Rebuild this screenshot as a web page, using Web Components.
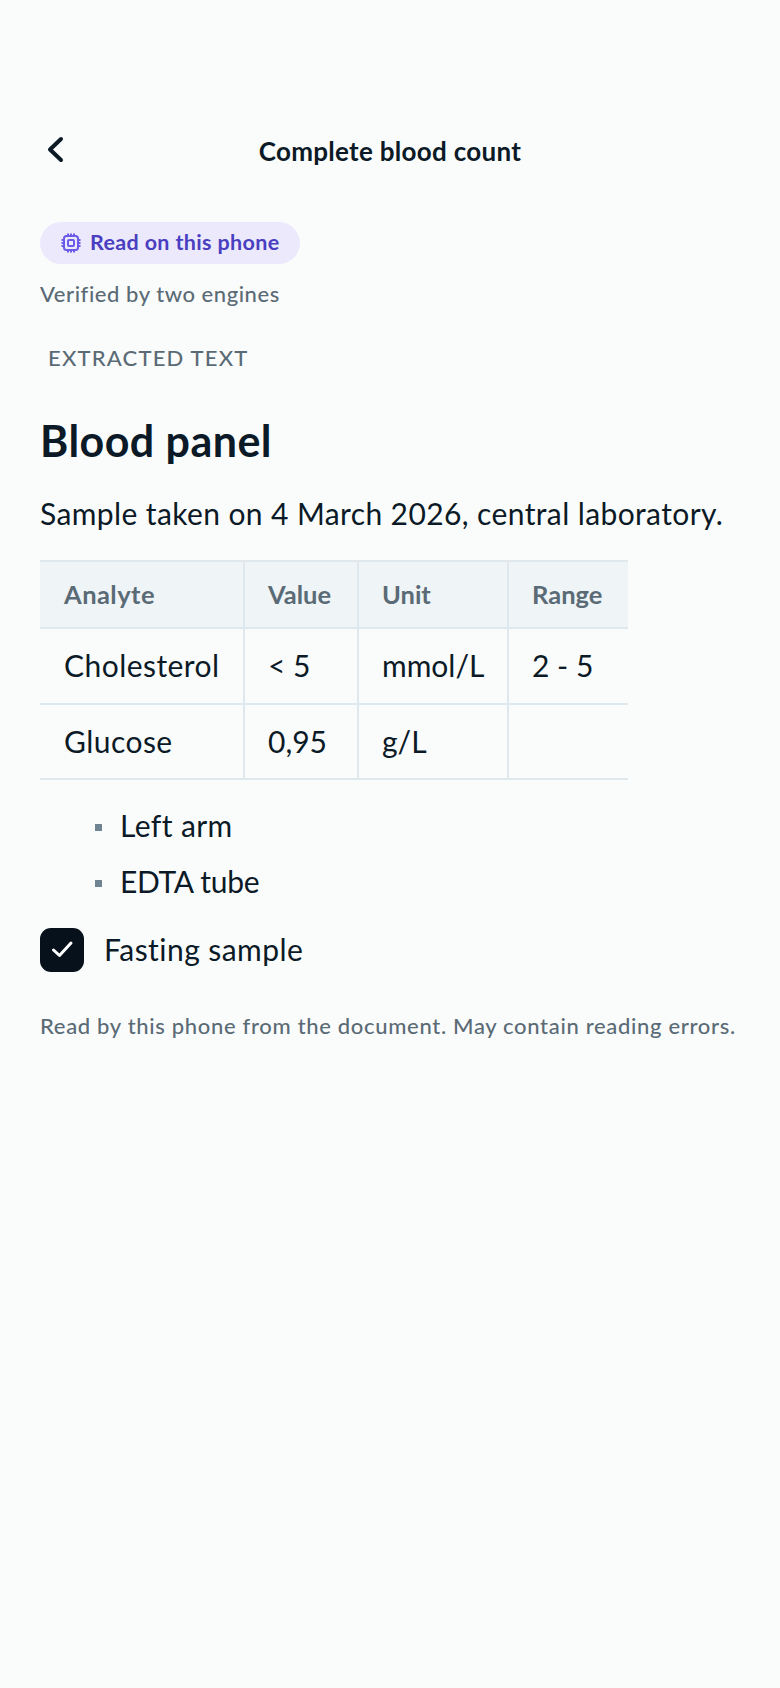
<!DOCTYPE html>
<html>
<head>
<meta charset="utf-8">
<style>
  html, body { margin: 0; background: #fafcfc; }
  body { font-family: "Lato", "Liberation Sans", sans-serif; color: #0b1a26; }
</style>
</head>
<body>
<result-screen>
  <top-bar title="Complete blood count"></top-bar>
  <read-badge>Read on this phone</read-badge>
  <small-note class="verified">Verified by two engines</small-note>
  <section-label>EXTRACTED TEXT</section-label>
  <doc-heading>Blood panel</doc-heading>
  <doc-para>Sample taken on 4 March 2026, central laboratory.</doc-para>
  <doc-table></doc-table>
  <doc-list></doc-list>
  <check-row>Fasting sample</check-row>
  <small-note class="foot">Read by this phone from the document. May contain reading errors.</small-note>
</result-screen>

<script>
class resultScreen extends HTMLElement {
  constructor(){
    super();
    this.attachShadow({mode:"open"});
    this.shadowRoot.innerHTML = `
      <style>
      :host { display: block; min-height: 1688px; box-sizing: border-box; padding: 126px 40px 0 40px; }
      ::slotted(.verified) { margin-top: 16px; letter-spacing: 0.55px; }
      ::slotted(.foot) { margin-top: 40px; letter-spacing: 0.68px; }
      </style>
      <slot></slot>
    `;
  }
}

class topBar extends HTMLElement {
  constructor(){
    super();
    this.attachShadow({mode:"open"});
  }
  connectedCallback(){
    this.shadowRoot.innerHTML = `
      <style>
      :host { display: flex; align-items: center; justify-content: center; position: relative; height: 50px; margin-bottom: 46px; }
      svg { position: absolute; left: 4px; top: 8px; }
      span { font-size: 26px; font-weight: 700; letter-spacing: 0.3px; }
      </style>
      <svg width="24" height="32" viewBox="0 0 24 32" fill="none" stroke="#0b1a26" stroke-width="4" stroke-linecap="round" stroke-linejoin="round"><path d="M17 5 6 15.5 17 26"/></svg>
      <span>${this.getAttribute("title")}</span>
    `;
  }
}

class readBadge extends HTMLElement {
  constructor(){
    super();
    this.attachShadow({mode:"open"});
    this.shadowRoot.innerHTML = `
      <style>
      :host { display: flex; align-items: center; gap: 9px; width: fit-content; height: 42px; padding: 0 21px 0 21px; border-radius: 21px; background: #ece9fd; color: #4a3fc0; font-size: 21.5px; font-weight: 700; letter-spacing: 0.35px; }
      span { padding-bottom: 2px; }
      </style>
      <svg width="20" height="20" viewBox="0 0 20 20" fill="none" stroke="#6a5ce8" stroke-width="2">
        <rect x="3" y="3" width="14" height="14" rx="2.5"/>
        <rect x="7" y="7" width="6" height="6" rx="1"/>
        <path d="M7 0.5v2M10 0.5v2M13 0.5v2M7 17.5v2M10 17.5v2M13 17.5v2M0.5 7h2M0.5 10h2M0.5 13h2M17.5 7h2M17.5 10h2M17.5 13h2"/>
      </svg>
      <span><slot></slot></span>
    `;
  }
}

class smallNote extends HTMLElement {
  constructor(){
    super();
    this.attachShadow({mode:"open"});
    this.shadowRoot.innerHTML = `
      <style>
      :host { display: block; font-size: 22px; line-height: 28px; letter-spacing: 0.6px; color: #5a6b76; font-weight: 500; }
      </style>
      <slot></slot>
    `;
  }
}

class sectionLabel extends HTMLElement {
  constructor(){
    super();
    this.attachShadow({mode:"open"});
    this.shadowRoot.innerHTML = `
      <style>
      :host { display: block; margin: 36px 0 0 8px; font-size: 22px; line-height: 28px; letter-spacing: 1.2px; color: #5a6b76; font-weight: 500; }
      </style>
      <slot></slot>
    `;
  }
}

class docHeading extends HTMLElement {
  constructor(){
    super();
    this.attachShadow({mode:"open"});
    this.shadowRoot.innerHTML = `
      <style>
      :host { display: block; margin-top: 42px; font-size: 43px; line-height: 54px; font-weight: 700; letter-spacing: 0.45px; }
      </style>
      <slot></slot>
    `;
  }
}

class docPara extends HTMLElement {
  constructor(){
    super();
    this.attachShadow({mode:"open"});
    this.shadowRoot.innerHTML = `
      <style>
      :host { display: block; margin-top: 25px; font-size: 30px; line-height: 40px; letter-spacing: 0.39px; }
      </style>
      <slot></slot>
    `;
  }
}

class docTable extends HTMLElement {
  constructor(){
    super();
    this.attachShadow({mode:"open"});
    const head = ["Analyte", "Value", "Unit", "Range"];
    const rows = [["Cholesterol", "< 5", "mmol/L", "2 - 5"], ["Glucose", "0,95", "g/L", ""]];
    this.shadowRoot.innerHTML = `
      <style>
      :host { display: block; margin-top: 27px; width: 588px; }
      .grid { display: grid; grid-template-columns: 205px 114px 150px 119px; grid-template-rows: 67px 76px 75px; border-top: 2px solid #dfe8ec; }
      .cell { box-sizing: border-box; display: flex; align-items: center; padding: 0 23px 2px; font-size: 30px; letter-spacing: 0; border-bottom: 2px solid #dfe8ec; border-right: 2px solid #dfe8ec; white-space: nowrap; }
      .cell:nth-child(4n+1) { padding-left: 24px; letter-spacing: 0.45px; }
      .cell:nth-child(4n) { border-right: 0; }
      .th { padding-bottom: 1px; background: #eff4f7; font-size: 25.5px; font-weight: 700; color: #5a6b76; }
      </style>
      <div class="grid">
        ${head.map(h => `<div class="cell th">${h}</div>`).join("")}
        ${rows.map(r => r.map(c => `<div class="cell">${c.replace("<", "&lt;")}</div>`).join("")).join("")}
      </div>
    `;
  }
}

class docList extends HTMLElement {
  constructor(){
    super();
    this.attachShadow({mode:"open"});
    this.shadowRoot.innerHTML = `
      <style>
      :host { display: block; margin-top: 17px; }
      div { display: flex; align-items: center; height: 56px; padding-left: 55px; font-size: 30px; letter-spacing: 0.4px; }
      i { width: 7px; height: 7px; background: #6f8490; margin: 4px 18px 0 0; }
      .tight { letter-spacing: -0.3px; }
      </style>
      <div><i></i>Left arm</div>
      <div class="tight"><i></i>EDTA tube</div>
    `;
  }
}

class checkRow extends HTMLElement {
  constructor(){
    super();
    this.attachShadow({mode:"open"});
    this.shadowRoot.innerHTML = `
      <style>
      :host { display: flex; align-items: center; gap: 20px; margin-top: 19px; font-size: 30px; letter-spacing: 0.45px; }
      .box { width: 44px; height: 44px; border-radius: 11px; background: #06111c; display: flex; align-items: center; justify-content: center; }
      span { padding-bottom: 2px; }
      </style>
      <div class="box">
        <svg width="24" height="24" viewBox="0 0 24 24" fill="none" stroke="#fff" stroke-width="3" stroke-linecap="round" stroke-linejoin="round"><path d="M3.5 12 9.5 17.5 21 5"/></svg>
      </div>
      <span><slot></slot></span>
    `;
  }
}

customElements.define("result-screen", resultScreen);
customElements.define("top-bar", topBar);
customElements.define("read-badge", readBadge);
customElements.define("small-note", smallNote);
customElements.define("section-label", sectionLabel);
customElements.define("doc-heading", docHeading);
customElements.define("doc-para", docPara);
customElements.define("doc-table", docTable);
customElements.define("doc-list", docList);
customElements.define("check-row", checkRow);
</script>
</body>
</html>
